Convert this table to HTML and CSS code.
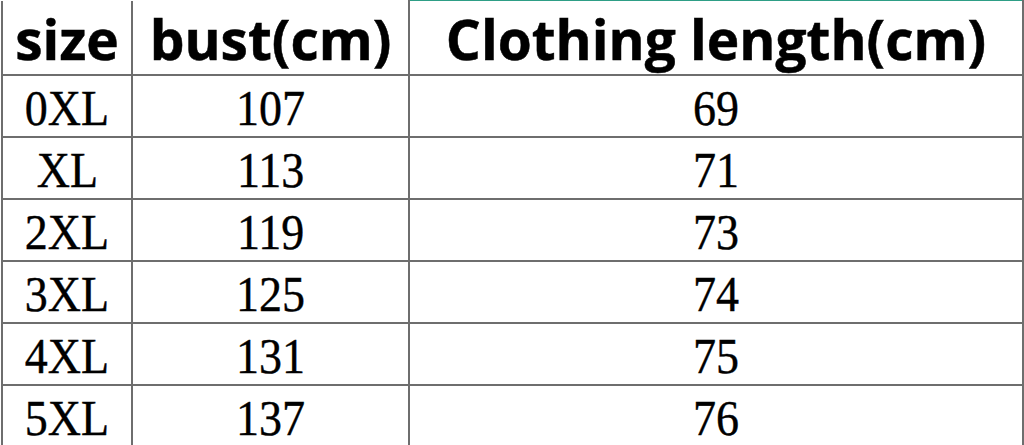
FILE: index.html
```html
<!DOCTYPE html>
<html>
<head>
<meta charset="utf-8">
<link rel="stylesheet" href="styles.css">
</head>
<body>
<table class="size-table">
  <colgroup>
    <col class="c1"><col class="c2"><col class="c3">
  </colgroup>
  <thead>
    <tr>
      <th class="h">size</th>
      <th class="h">bust(cm)</th>
      <th class="h h-last">Clothing length(cm)</th>
    </tr>
  </thead>
  <tbody>
    <tr><td><span class="v">0XL</span></td><td><span class="v">107</span></td><td><span class="v">69</span></td></tr>
    <tr><td><span class="v">XL</span></td><td><span class="v">113</span></td><td><span class="v">71</span></td></tr>
    <tr><td><span class="v">2XL</span></td><td><span class="v">119</span></td><td><span class="v">73</span></td></tr>
    <tr><td><span class="v">3XL</span></td><td><span class="v">125</span></td><td><span class="v">74</span></td></tr>
    <tr><td><span class="v">4XL</span></td><td><span class="v">131</span></td><td><span class="v">75</span></td></tr>
    <tr><td><span class="v">5XL</span></td><td><span class="v">137</span></td><td><span class="v">76</span></td></tr>
  </tbody>
</table>
</body>
</html>
```
FILE: styles.css
```css
html, body {
  margin: 0;
  padding: 0;
  background: #fff;
  overflow: hidden;
  width: 1024px;
  height: 445px;
}
.size-table {
  border-collapse: collapse;
  table-layout: fixed;
  margin-left: 1px;
  width: 1023px;
}
.c1 { width: 130px; }
.c2 { width: 277px; }
.c3 { width: 614px; }
.size-table th,
.size-table td {
  border: 2px solid #6e6e6e;
  padding: 0;
  text-align: center;
  vertical-align: middle;
  color: #000;
}
.size-table thead th {
  border-top: none;
  height: 74px;
  font-family: "Open Sans", "Noto Sans", sans-serif;
  font-weight: 700;
  font-size: 55px;
  line-height: 60px;
  padding-top: 4px;
  padding-bottom: 0;
  box-sizing: border-box;
  white-space: nowrap;
  -webkit-text-stroke: 0.5px #000;
}
.size-table thead th.h-last {
  border-top: 1px solid #2e9e86;
}
.size-table td {
  height: 60px;
  font-family: "Liberation Serif", "Times New Roman", serif;
  font-size: 50px;
  line-height: 56px;
}
.v {
  display: inline-block;
  transform: scaleX(0.92);
  padding-top: 4px;
  -webkit-text-stroke: 0.4px #000;
}
```
